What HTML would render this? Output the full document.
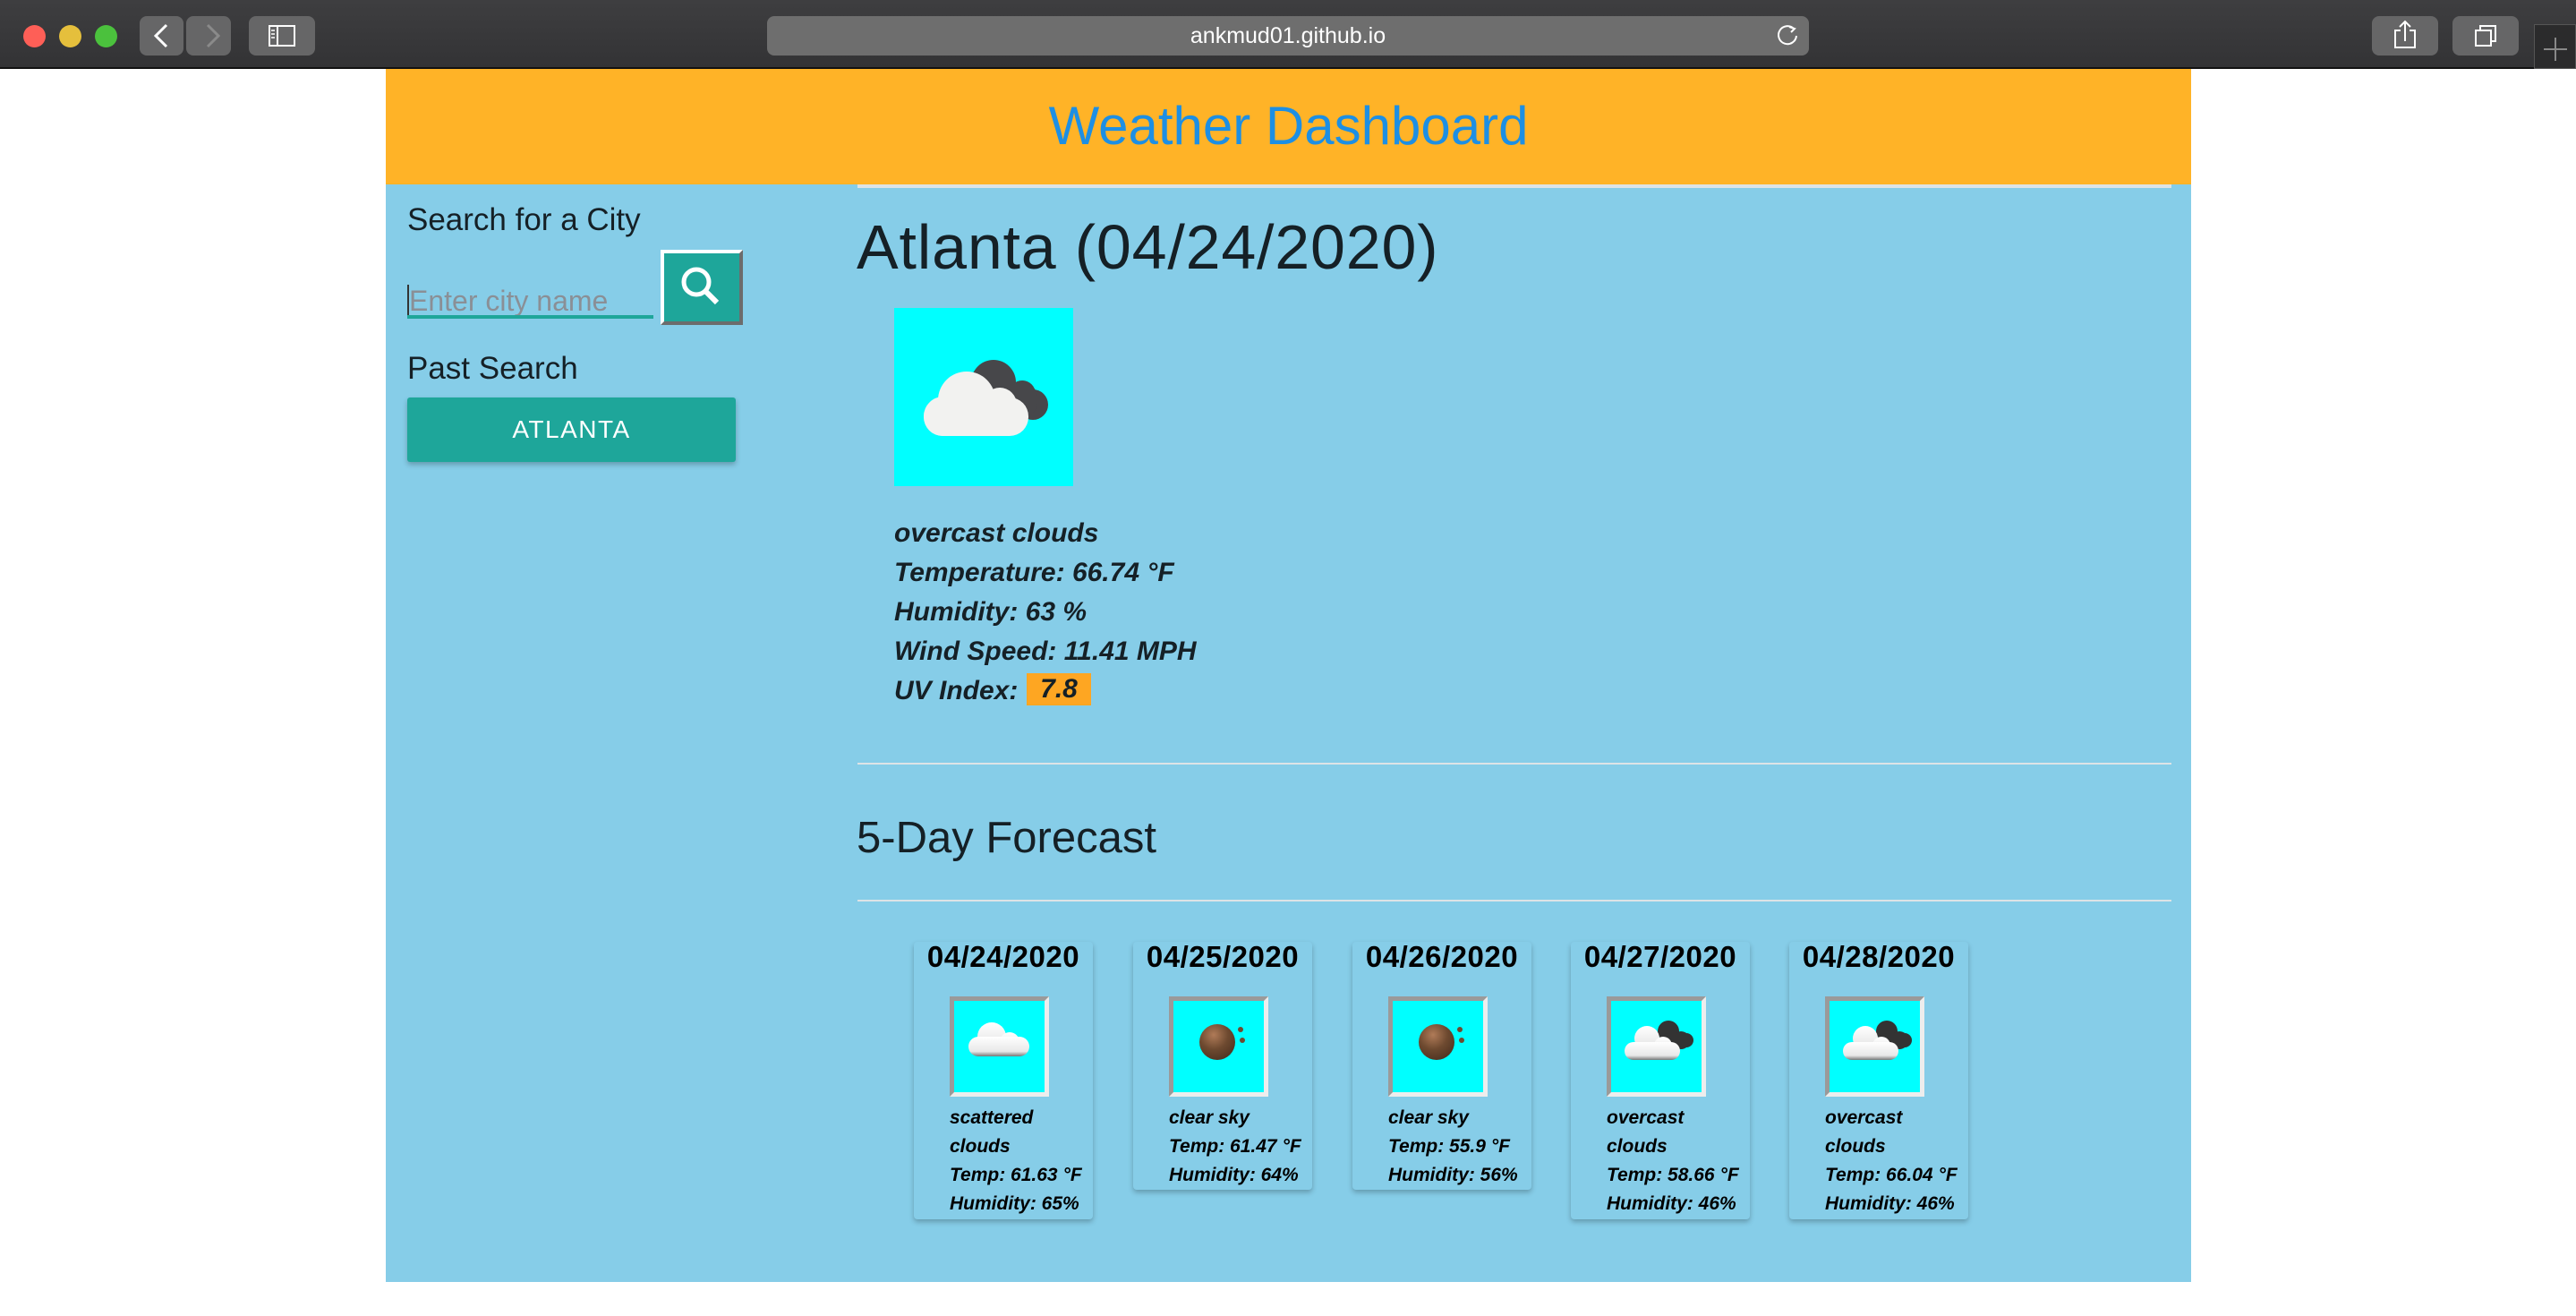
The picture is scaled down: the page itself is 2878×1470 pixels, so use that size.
<!DOCTYPE html>
<html><head><meta charset="utf-8">
<style>
*{margin:0;padding:0;box-sizing:border-box}
body{width:2878px;height:1470px;background:#fff;position:relative;overflow:hidden;font-family:"Liberation Sans",sans-serif}
.a{position:absolute}
.bar{left:0;top:0;width:2878px;height:77px;background:linear-gradient(#3e3e40,#333335);border-bottom:2px solid #111}
.btn{background:#666667;border-radius:8px;height:44px;top:18px}
.dot{width:25px;height:25px;border-radius:50%;top:28px}
.t{color:#152026;white-space:nowrap}
.det{font-weight:bold;font-style:italic;font-size:30px;left:999px}
.card{width:200px;background:#86cde8;border-radius:4px;box-shadow:0 3px 6px rgba(0,0,0,.25);top:1052px}
.card .d{position:absolute;left:0;width:200px;text-align:center;top:-2px;height:34px;line-height:38px;font-weight:bold;font-size:33px;letter-spacing:.5px;color:#000}
.card .im{position:absolute;left:40px;top:61px;width:111px;height:112px;border:5px solid;border-color:#9a9a9a #ededed #ededed #9a9a9a;background:#0ff}
.card .x{position:absolute;left:40px;top:181px;font-weight:bold;font-style:italic;font-size:21px;line-height:32px;color:#000;white-space:nowrap}
hr{position:absolute;border:none;height:2px;background:#dde3e6;left:958px;width:1468px}
</style></head><body>
<div class="a bar"></div>
<div class="a dot" style="left:26px;background:#fe5f57"></div>
<div class="a dot" style="left:66px;background:#e5bf3c"></div>
<div class="a dot" style="left:106px;background:#4bc13d"></div>
<div class="a btn" style="left:156px;width:49px"></div>
<div class="a btn" style="left:208px;width:50px"></div>
<svg class="a" style="left:156px;top:18px" width="102" height="44"><path d="M30 10 L18 22 L30 34" stroke="#fff" stroke-width="3" fill="none"/><path d="M76 10 L88 22 L76 34" stroke="#8a8a8a" stroke-width="3" fill="none"/></svg>
<div class="a btn" style="left:278px;width:74px"></div>
<svg class="a" style="left:278px;top:18px" width="74" height="44"><rect x="23" y="11" width="28" height="22" fill="none" stroke="#fff" stroke-width="2"/><line x1="32" y1="11" x2="32" y2="33" stroke="#fff" stroke-width="2"/><path d="M25 16h4M25 20h4M25 24h4" stroke="#fff" stroke-width="1.5"/></svg>
<div class="a btn" style="left:857px;width:1164px;background:#6e6e6e"></div>
<div class="a" style="left:857px;width:1164px;top:18px;height:44px;line-height:44px;text-align:center;color:#fff;font-size:25px">ankmud01.github.io</div>
<svg class="a" style="left:1984px;top:26px" width="28" height="28"><path d="M20 6 A10 10 0 1 0 23 14" stroke="#fff" stroke-width="2" fill="none"/><path d="M15 4 L21 6 L17 10" stroke="#fff" stroke-width="2" fill="none"/></svg>
<div class="a btn" style="left:2650px;width:74px"></div>
<svg class="a" style="left:2650px;top:18px" width="74" height="44"><path d="M32 16h-6v19h22v-19h-6" stroke="#fff" stroke-width="2" fill="none"/><path d="M37 28V6M31 12l6-6 6 6" stroke="#fff" stroke-width="2" fill="none"/></svg>
<div class="a btn" style="left:2740px;width:74px"></div>
<svg class="a" style="left:2740px;top:18px" width="74" height="44"><rect x="26" y="16" width="17" height="17" fill="none" stroke="#fff" stroke-width="2"/><path d="M31 16v-5h17v17h-5" stroke="#fff" stroke-width="2" fill="none"/></svg>
<div class="a" style="left:2831px;top:27px;width:47px;height:50px;background:#2b2b2c;border:1px solid #555"></div>
<svg class="a" style="left:2831px;top:27px" width="47" height="50"><path d="M24 15v26M11 28h26" stroke="#888" stroke-width="2"/></svg>

<div class="a" style="left:431px;top:77px;width:2017px;height:129px;background:#ffb327"></div>
<div class="a" style="left:431px;top:105px;width:2017px;text-align:center;font-size:60px;color:#1d8fe4;line-height:72px">Weather Dashboard</div>
<div class="a" style="left:431px;top:206px;width:2017px;height:1226px;background:#86cde8"></div>
<hr style="top:206px;height:4px">

<div class="a t" style="left:455px;top:226px;font-size:35px;line-height:40px">Search for a City</div>
<div class="a" style="left:455px;top:318px;font-size:32px;color:#8a8f96;line-height:36px;border-left:2px solid #333;padding-left:0">Enter city name</div>
<div class="a" style="left:455px;top:352px;width:275px;height:4px;background:#1ea69a"></div>
<div class="a" style="left:738px;top:279px;width:92px;height:84px;background:#1ea69a;border:4px solid;border-color:#fff #6c6c6c #6c6c6c #fff"></div>
<svg class="a" style="left:738px;top:279px" width="92" height="84"><circle cx="40" cy="36" r="14" stroke="#fff" stroke-width="5" fill="none"/><path d="M50 46 L63 59" stroke="#fff" stroke-width="6"/></svg>
<div class="a t" style="left:455px;top:392px;font-size:35px;line-height:40px">Past Search</div>
<div class="a" style="left:455px;top:444px;width:367px;height:72px;background:#1ea69a;border-radius:3px;box-shadow:0 3px 6px rgba(0,0,0,.25);color:#fff;text-align:center;line-height:72px;font-size:28px;letter-spacing:1.5px">ATLANTA</div>

<div class="a t" style="left:957px;top:236px;font-size:70px;line-height:80px;letter-spacing:0.8px">Atlanta (04/24/2020)</div>
<div class="a" style="left:999px;top:344px;width:200px;height:199px;background:#0ff"></div>
<svg class="a" style="left:999px;top:344px" width="200" height="199">
<g fill="#47474a"><circle cx="111" cy="83" r="25"/><circle cx="143" cy="96" r="15"/><circle cx="155" cy="108" r="17"/><rect x="100" y="85" width="60" height="35" rx="14"/></g>
<g fill="#f2f2f0"><circle cx="81" cy="103" r="32"/><circle cx="118" cy="108" r="19"/><circle cx="55" cy="121" r="22"/><rect x="33" y="100" width="117" height="43" rx="21"/></g>
</svg>
<div class="a t det" style="top:578px;line-height:36px">overcast clouds</div>
<div class="a t det" style="top:622px;line-height:36px">Temperature: 66.74 °F</div>
<div class="a t det" style="top:666px;line-height:36px">Humidity: 63 %</div>
<div class="a t det" style="top:710px;line-height:36px">Wind Speed: 11.41 MPH</div>
<div class="a t det" style="top:754px;line-height:36px">UV Index:</div>
<div class="a" style="left:1147px;top:752px;width:72px;height:36px;background:#fea622;font-weight:bold;font-style:italic;font-size:30px;line-height:36px;text-align:center;color:#152026">7.8</div>
<hr style="top:852px">
<div class="a t" style="left:957px;top:906px;font-size:49px;line-height:60px">5-Day Forecast</div>
<hr style="top:1005px">

<div class="a card" style="left:1021px;height:310px"><div class="d">04/24/2020</div><div class="im"><svg width="101" height="102"><defs><linearGradient id="w" x1="0" y1="0" x2="0" y2="1"><stop offset="0" stop-color="#fff"/><stop offset=".75" stop-color="#e8e8e8"/><stop offset="1" stop-color="#777"/></linearGradient></defs><g fill="url(#w)"><circle cx="42" cy="40" r="16"/><circle cx="62" cy="46" r="11"/><rect x="16" y="40" width="68" height="22" rx="11"/></g></svg></div><div class="x">scattered<br>clouds<br>Temp: 61.63 °F<br>Humidity: 65%</div></div>
<div class="a card" style="left:1266px;height:277px"><div class="d">04/25/2020</div><div class="im"><svg width="101" height="102"><defs><radialGradient id="m" cx=".4" cy=".3" r=".8"><stop offset="0" stop-color="#b07b58"/><stop offset=".5" stop-color="#6e4a30"/><stop offset="1" stop-color="#4a3020"/></radialGradient></defs><ellipse cx="49" cy="46" rx="20" ry="20" fill="url(#m)"/><circle cx="75" cy="32" r="3" fill="#6e4a30"/><circle cx="77" cy="44" r="3" fill="#6e4a30"/></svg></div><div class="x">clear sky<br>Temp: 61.47 °F<br>Humidity: 64%</div></div>
<div class="a card" style="left:1511px;height:277px"><div class="d">04/26/2020</div><div class="im"><svg width="101" height="102"><ellipse cx="49" cy="46" rx="20" ry="20" fill="url(#m)"/><circle cx="75" cy="32" r="3" fill="#6e4a30"/><circle cx="77" cy="44" r="3" fill="#6e4a30"/></svg></div><div class="x">clear sky<br>Temp: 55.9 °F<br>Humidity: 56%</div></div>
<div class="a card" style="left:1755px;height:310px"><div class="d">04/27/2020</div><div class="im"><svg width="101" height="102"><g fill="#333"><circle cx="64" cy="34" r="12"/><circle cx="78" cy="44" r="10"/><rect x="56" y="36" width="36" height="16" rx="8"/></g><g fill="url(#w)"><circle cx="40" cy="42" r="14"/><circle cx="58" cy="50" r="10"/><rect x="15" y="46" width="62" height="20" rx="10"/></g></svg></div><div class="x">overcast<br>clouds<br>Temp: 58.66 °F<br>Humidity: 46%</div></div>
<div class="a card" style="left:1999px;height:310px"><div class="d">04/28/2020</div><div class="im"><svg width="101" height="102"><g fill="#333"><circle cx="64" cy="34" r="12"/><circle cx="78" cy="44" r="10"/><rect x="56" y="36" width="36" height="16" rx="8"/></g><g fill="url(#w)"><circle cx="40" cy="42" r="14"/><circle cx="58" cy="50" r="10"/><rect x="15" y="46" width="62" height="20" rx="10"/></g></svg></div><div class="x">overcast<br>clouds<br>Temp: 66.04 °F<br>Humidity: 46%</div></div>
</body></html>
